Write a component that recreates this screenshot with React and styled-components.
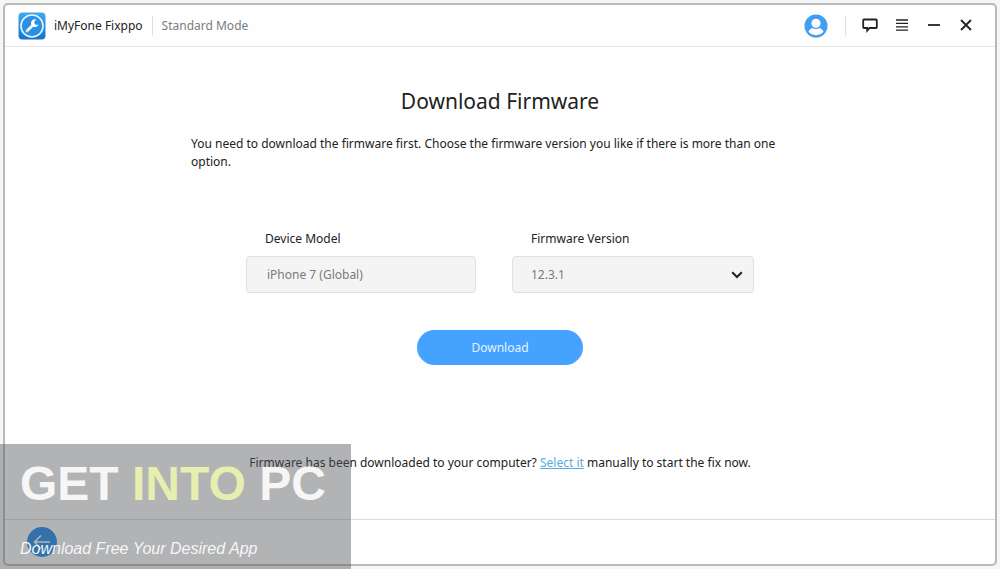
import { useState } from 'react';
import styled, { createGlobalStyle } from 'styled-components';

function App() {
  const [version, setVersion] = useState('12.3.1');

  return (
    <>
      <GlobalStyle />
      <Page>
        <Window>
          <Header>
            <Logo />
            <AppName>iMyFone Fixppo</AppName>
            <Divider $gap={9} />
            <Mode>Standard Mode</Mode>
            <Tools>
              <AccountButton type='button' aria-label='Account'>
                <AccountIcon />
              </AccountButton>
              <Divider $gap={8} />
              <IconButton type='button' aria-label='Feedback'>
                <svg width='16' height='16' viewBox='0 0 16 16'>
                  <path d='M2 2.500h12q.8 0 .8.8v6.900q0 .8-.8.8H7.600L5.200 13.600v-2.600H2q-.8 0-.8-.8V3.300q0-.8.8-.8z' />
                </svg>
              </IconButton>
              <IconButton type='button' aria-label='Menu'>
                <MenuIcon width='16' height='16' viewBox='0 0 16 16'>
                  <path d='M2 3h12M2 6.400h12M2 9.800h12M2 13.200h12' />
                </MenuIcon>
              </IconButton>
              <IconButton type='button' aria-label='Minimize'>
                <svg width='16' height='16' viewBox='0 0 16 16'>
                  <path d='M2 8h12' />
                </svg>
              </IconButton>
              <IconButton type='button' aria-label='Close'>
                <svg width='16' height='16' viewBox='0 0 16 16'>
                  <path d='M3 3l10 10M13 3L3 13' />
                </svg>
              </IconButton>
            </Tools>
          </Header>

          <Main>
            <Title>Download Firmware</Title>
            <Intro>
              You need to download the firmware first. Choose the firmware version you like if there is more than one option.
            </Intro>

            <Fields>
              <Field $width={230}>
                <label htmlFor='model'>Device Model</label>
                <input id='model' type='text' value='iPhone 7 (Global)' readOnly />
              </Field>
              <Field $width={242}>
                <label htmlFor='version'>Firmware Version</label>
                <SelectWrap>
                  <select id='version' value={version} onChange={(e) => setVersion(e.target.value)}>
                    <option>12.3.1</option>
                  </select>
                  <svg width='12' height='8' viewBox='0 0 12 8'>
                    <path d='M1.2 1.2L6 6l4.8-4.8' />
                  </svg>
                </SelectWrap>
              </Field>
            </Fields>

            <DownloadButton type='button'>Download</DownloadButton>

            <Hint>
              Firmware has been downloaded to your computer? <a href='#select'>Select it</a> manually to start the fix now.
            </Hint>
          </Main>

          <Footer>
            <BackButton type='button' aria-label='Back'>
              <svg width='20' height='20' viewBox='0 0 20 20'>
                <path d='M18 10H2.5M9 3.5L2.5 10L9 16.5' />
              </svg>
            </BackButton>
          </Footer>
        </Window>

        <Watermark>
          <Brand>GET <span>INTO</span> PC</Brand>
          <Tagline>Download Free Your Desired App</Tagline>
        </Watermark>
      </Page>
    </>
  );
}

function Logo() {
  return (
    <svg width='28' height='28' viewBox='0 0 28 28' aria-hidden='true'>
      <defs>
        <linearGradient id='logoFill' x1='0' y1='0' x2='0' y2='1'>
          <stop offset='0' stopColor='#3fabee' />
          <stop offset='1' stopColor='#1673d2' />
        </linearGradient>
      </defs>
      <rect x='0.5' y='0.5' width='27' height='27' rx='4' fill='url(#logoFill)' />
      <circle cx='14' cy='14' r='11' fill='#2b8fe2' stroke='#eaf6ff' strokeWidth='1.6' />
      {/* wrench */}
      <path d='M9 19L15.5 12.5' stroke='#fff' strokeWidth='2.6' strokeLinecap='round' />
      <path d='M18.600 7.600a3.900 3.900 0 1 0 2 4.800l-2.600.5-1.700-1.600.3-2.200z' fill='#fff' />
      <circle cx='9.2' cy='18.8' r='0.6' fill='#2b8fe2' />
    </svg>
  );
}

function AccountIcon() {
  return (
    <svg width='24' height='24' viewBox='0 0 24 24'>
      <circle cx='12' cy='12' r='11.5' fill='#3f9ff5' />
      <path d='M4.400 17.600c1-2.200 3-3.400 5-3.600h5.200c2 .2 4 1.400 5 3.600-1.600 2.300-4.400 3.600-7.600 3.600s-6-1.300-7.600-3.600z' fill='#fff' />
      <circle cx='12' cy='9.3' r='5.2' fill='#fff' stroke='#3f9ff5' strokeWidth='1.2' />
    </svg>
  );
}

export default App;

const GlobalStyle = createGlobalStyle`
  * {
    box-sizing: border-box;
  }

  body {
    margin: 0;
    background: #f6f6f6;
    color: #222;
    font-family: 'Noto Sans', 'Open Sans', sans-serif;
    font-size: 12px;
    line-height: 18px;
  }

  button, input, select {
    font: inherit;
  }

  button {
    border: 0;
    padding: 0;
    background: none;
    cursor: pointer;
  }
`;

const Page = styled.div`
  position: relative;
  display: flex;
  min-height: 100vh;
  padding: 3px;
`;

const Window = styled.div`
  flex: 1;
  display: flex;
  flex-direction: column;
  border: 2px solid #b9b9b9;
  border-radius: 5px;
  background: #fefefe;
`;

const Header = styled.header`
  display: flex;
  align-items: center;
  height: 42px;
  padding: 0 13px;
  border-bottom: 1px solid #e8e8e8;
`;

const AppName = styled.span`
  margin-left: 8px;
`;

const Mode = styled.span`
  color: #7c7c7c;
`;

const Divider = styled.span`
  width: 1px;
  height: 20px;
  margin: 0 ${(props) => props.$gap}px;
  background: #e0e0e0;
`;

const Tools = styled.div`
  display: flex;
  align-items: center;
  margin-left: auto;
`;

const AccountButton = styled.button`
  display: flex;
  margin-right: 9px;
`;

const IconButton = styled.button`
  display: flex;
  justify-content: center;
  width: 32px;
  padding-bottom: 2px;

  svg {
    fill: none;
    stroke: #222;
    stroke-width: 1.8;
  }
`;

const MenuIcon = styled.svg`
  && {
    stroke-width: 1.3;
  }
`;

const Main = styled.main`
  flex: 1;
  display: flex;
  flex-direction: column;
  align-items: center;
  padding: 39px 20px 0;
`;

const Title = styled.h1`
  margin: 0;
  font-size: 21px;
  font-weight: 400;
  line-height: 30px;
`;

const Intro = styled.p`
  width: 100%;
  max-width: 618px;
  margin: 19px 0 0;
`;

const Fields = styled.div`
  display: flex;
  gap: 36px;
  margin-top: 59px;
`;

const Field = styled.div`
  width: ${(props) => props.$width}px;

  label {
    display: block;
    margin-bottom: 8px;
    padding-left: 19px;
  }

  input, select {
    display: block;
    width: 100%;
    height: 37px;
    padding: 0 20px;
    border: 1px solid #e0e0e0;
    border-radius: 4px;
    background: #f4f4f4;
    color: #7a7a7a;
    appearance: none;
  }

  select {
    padding: 0 18px;
  }
`;

const SelectWrap = styled.div`
  position: relative;

  svg {
    position: absolute;
    top: 15px;
    right: 11px;
    fill: none;
    stroke: #222;
    stroke-width: 2;
    pointer-events: none;
  }
`;

const DownloadButton = styled.button`
  width: 166px;
  height: 35px;
  margin-top: 37px;
  border-radius: 18px;
  background: #45a3ff;
  color: #e4f3ff;
`;

const Hint = styled.p`
  margin: auto 0 47px;

  a {
    color: #57aede;
  }
`;

const Footer = styled.footer`
  display: flex;
  align-items: center;
  height: 45px;
  padding: 0 22px;
  border-top: 1px solid #dcdcdc;
`;

const BackButton = styled.button`
  display: flex;
  align-items: center;
  justify-content: center;
  width: 30px;
  height: 30px;
  border-radius: 50%;
  background: #1a88e8;

  svg {
    fill: none;
    stroke: #fff;
    stroke-width: 1.6;
  }
`;

const Watermark = styled.div`
  position: absolute;
  left: 0;
  bottom: 0;
  width: 351px;
  height: 125px;
  padding: 12px 20px;
  background: rgba(82, 84, 88, 0.44);
  color: #f6f6f6;
  font-family: 'Liberation Sans', Arial, sans-serif;
  pointer-events: none;
`;

const Brand = styled.div`
  font-size: 48px;
  font-weight: 700;
  line-height: 56px;
  white-space: nowrap;

  span {
    color: #e6eeb0;
  }
`;

const Tagline = styled.div`
  margin-top: 27px;
  font-size: 16px;
  font-style: italic;
  line-height: 20px;
`;
